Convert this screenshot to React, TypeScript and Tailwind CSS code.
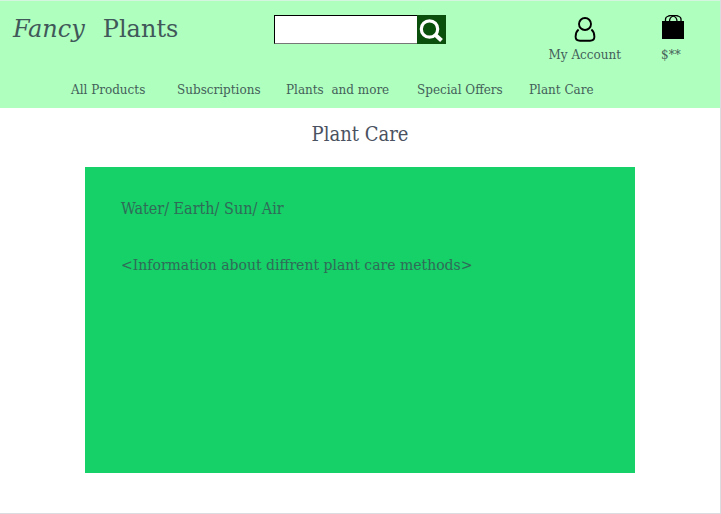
import { useState } from "react";

const links = ["All Products", "Subscriptions", "Plants \u00a0and more", "Special Offers", "Plant Care"];

function SearchIcon() {
  return (
    <svg viewBox="0 0 29 29" className="h-[29px] w-[29px]" fill="none" stroke="#fff" aria-hidden="true">
      <circle cx="12.500" cy="14" r="8.2" strokeWidth="3.2" />
      <path d="M18.500 20l6 5.500" strokeWidth="4" />
    </svg>
  );
}

function AccountIcon() {
  return (
    <svg viewBox="0 0 24 28" className="h-7 w-6" fill="none" stroke="#000" strokeWidth="1.9" aria-hidden="true">
      <circle cx="12" cy="9" r="6" />
      <path d="M5.600 14.600C3.400 16.400 2.600 19 2.600 21.800c0 2.600 1.800 3.900 4.400 3.900h10c2.600 0 4.400-1.300 4.400-3.900 0-2.800-.8-5.400-3-7.200" />
    </svg>
  );
}

function BagIcon() {
  return (
    <svg viewBox="0 0 24 28" className="h-7 w-6" aria-hidden="true">
      <path d="M1 6h22v18H1z" fill="#000" />
      <g fill="none" stroke="#000" strokeWidth="1.3">
        <path d="M4.500 6.500V4C4.500 2.500 5.500 1.700 7.500 1L9 .7h6.500l1.500.3c2 .7 3 1.500 3 3v2.500" />
        <path d="M8.500 6.500C8.500 3.800 9.800 1.800 12.200 1M16 6.500c0-2.700-1.300-4.700-3.700-5.500" />
      </g>
    </svg>
  );
}

export default function App() {
  const [query, setQuery] = useState("");
  return (
    <div className="flex min-h-screen flex-col border-r border-b border-[#dadce0] bg-white font-['DejaVu_Serif_Condensed','DejaVu_Serif',serif] text-[#4a5160]">
      <header className="border-t border-[#d5f5e0] bg-[#afffbe] pb-2 font-['DejaVu_Serif',serif] text-xs leading-5 text-[#43605a]">
        <div className="grid grid-cols-[1fr_172px_1fr] items-start pt-[14px]">
          <h1 className="flex gap-[18px] pl-[13px] text-2xl leading-7 text-[#41585a]">
            <em>Fancy</em>
            <span>Plants</span>
          </h1>
          <form role="search" className="flex" onSubmit={(e) => e.preventDefault()}>
            <input
              type="search"
              aria-label="Search plants"
              value={query}
              onChange={(e) => setQuery(e.target.value)}
              className="h-[29px] min-w-0 flex-1 border border-r-0 border-black border-b-[#777] bg-white px-2 outline-none"
            />
            <button type="submit" aria-label="Search" className="bg-[#0b4f0c]">
              <SearchIcon />
            </button>
          </form>
          <div className="flex justify-end gap-10 pr-[35px]">
            <a href="#account" className="flex flex-col items-center gap-0.5">
              <AccountIcon />
              <span>My Account</span>
            </a>
            <a href="#cart" className="flex flex-col gap-0.5">
              <BagIcon />
              <span>$**</span>
            </a>
          </div>
        </div>
        <nav className="mt-[15px] grid grid-cols-[106px_109px_131px_112px_auto] pl-[71px] whitespace-nowrap">
          {links.map((label) => (
            <a key={label} href="#">
              {label}
            </a>
          ))}
        </nav>
      </header>
      <main className="px-[85px] pt-3 pb-10">
        <h2 className="text-center text-xl leading-7">Plant Care</h2>
        <section className="mt-[19px] min-h-[306px] bg-[#16d068] px-9 pt-[30px] text-[#306b58]">
          <h3 className="text-base leading-6">Water/ Earth/ Sun/ Air</h3>
          <p className="mt-8 font-['DejaVu_Serif',serif] text-sm leading-6">&lt;Information about diffrent plant care methods&gt;</p>
        </section>
      </main>
    </div>
  );
}
